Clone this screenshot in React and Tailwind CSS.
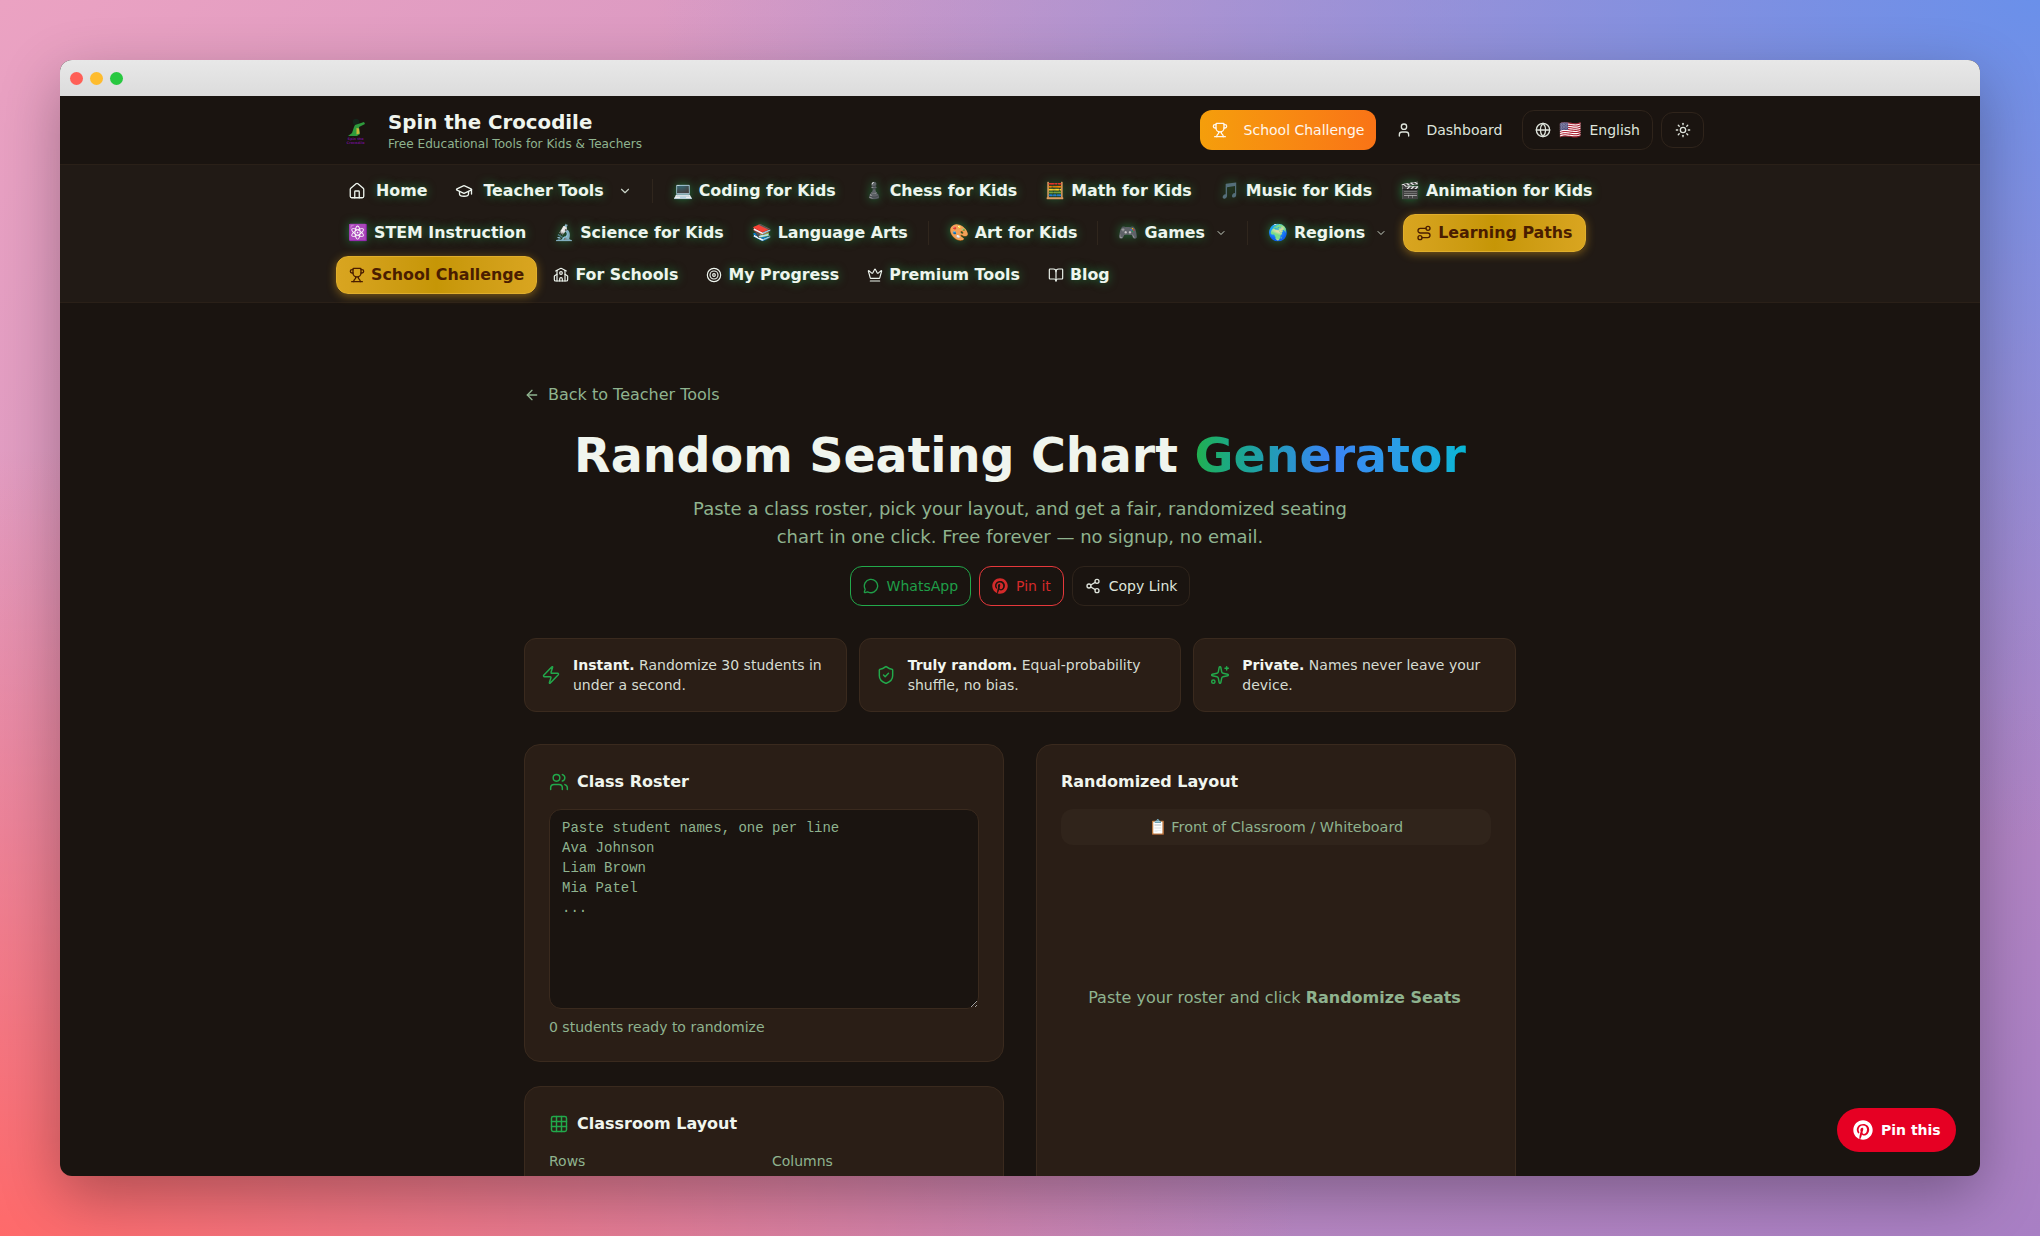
import {
    ArrowLeft, BookOpen, ChevronDown, Crown, Globe, GraduationCap, Grid3x3, House, MessageCircle,
    Route, School, Share2, ShieldCheck, Sparkles, Sun, Target, Trophy, User, Users, Zap,
} from 'lucide-react';
import { FaPinterest } from 'react-icons/fa';

const glow = '[text-shadow:0_0_10px_rgba(34,197,94,0.55)]';

function NavItem({ icon: Icon, emoji, label, caret, iconSize = 16, gap = 'gap-1.5' }) {
    return (
        <a className={`flex h-[38px] items-center ${gap} rounded-xl px-3 text-[15.85px] font-bold text-[#eef5ee] ${glow}`}>
            {Icon && <Icon size={iconSize} strokeWidth={1.75} />}
            {emoji && <span className="w-5 text-center text-base leading-none">{emoji}</span>}
            {label}
            {caret && <ChevronDown size={caret} className="ml-1 text-[#c9d2c6]" />}
        </a>
    );
}

function GoldPill({ icon: Icon, label }) {
    return (
        <a className="flex h-[38px] items-center gap-1.5 rounded-xl border border-[#e0ae2c] bg-gradient-to-r from-[#d9a520] via-[#c69606] to-[#d9a520] px-3 text-[15.85px] font-bold text-[#4a1d00] shadow-[0_2px_10px_rgba(234,170,30,0.45)]">
            <Icon size={16} strokeWidth={2} />
            {label}
        </a>
    );
}

function Divider() {
    return <div className="mx-1 h-6 w-px bg-[#30261d]" />;
}

function Feature({ icon: Icon, title, text }) {
    return (
        <div className="flex items-center gap-3 rounded-xl border border-[#3a2a1e] bg-[#2a1e16] px-4 py-4 text-sm leading-5 text-[#d6dcd2]">
            <Icon size={20} className="shrink-0 text-[#22a94b]" strokeWidth={1.75} />
            <p><b className="font-bold text-[#f2f6f0]">{title}</b> {text}</p>
        </div>
    );
}

function CrocLogo() {
    return (
        <svg width="40" height="40" viewBox="0 0 40 40" className="shrink-0">
            <circle cx="20" cy="12" r="3.2" fill="#14241a" />
            <path d="M19 15l9-3 1 2-6 3 1 7-3 2h-9l4-3 2-6z" fill="#2e9a3c" />
            <path d="M20.5 18l2.5 0.5 0.5 5-3 1z" fill="#c8b43a" />
            <text x="19.5" y="30" textAnchor="middle" fontSize="3.4" fontWeight="700" fill="#6b0f8a" fontFamily="DejaVu Sans">Spin the</text>
            <text x="19.5" y="34" textAnchor="middle" fontSize="3.4" fontWeight="700" fill="#6b0f8a" fontFamily="DejaVu Sans">Crocodile</text>
        </svg>
    );
}

export default function App() {
    const placeholder = 'Paste student names, one per line\nAva Johnson\nLiam Brown\nMia Patel\n...';

    return (
        <div className="h-[1236px] w-[2040px] overflow-hidden bg-[radial-gradient(ellipse_at_top_right,#6a90ea_0%,transparent_48%),radial-gradient(ellipse_at_bottom_left,#ff6a6a_0%,transparent_45%),linear-gradient(135deg,#eba2c2,#a87fc4)] p-[60px] font-['DejaVu_Sans',sans-serif]">
            <div className="relative flex h-[1116px] flex-col overflow-hidden rounded-xl bg-[#1a1410] shadow-[0_20px_60px_rgba(0,0,0,0.3)]">
                {/* Window chrome */}
                <div className="flex h-9 shrink-0 items-center gap-[7px] bg-gradient-to-b from-[#e8e8e8] to-[#dcdcdc] pl-[10px]">
                    <span className="h-[13px] w-[13px] rounded-full bg-[#ff5f57]" />
                    <span className="h-[13px] w-[13px] rounded-full bg-[#febc2e]" />
                    <span className="h-[13px] w-[13px] rounded-full bg-[#28c840]" />
                </div>

                {/* Header */}
                <header className="shrink-0 border-b border-[#2a2018]">
                    <div className="mx-auto flex h-[68px] w-[1400px] items-center justify-between px-4">
                        <div className="flex items-center gap-3">
                            <CrocLogo />
                            <div>
                                <div className="pt-px text-[19.8px] leading-[27px] font-bold text-[#f0f5ee]">Spin the Crocodile</div>
                                <div className="text-[12.1px] leading-4 text-[#8fb38f]">Free Educational Tools for Kids &amp; Teachers</div>
                            </div>
                        </div>
                        <div className="flex items-center gap-2">
                            <a className="flex h-10 items-center gap-4 rounded-xl bg-gradient-to-r from-[#f59e0b] to-[#f97316] px-3 text-sm text-[#fff7ed]">
                                <Trophy size={16} />
                                School Challenge
                            </a>
                            <a className="flex h-10 items-center gap-3.5 px-3 text-sm text-[#dfe4dc]">
                                <User size={16} />
                                Dashboard
                            </a>
                            <a className="flex h-10 items-center gap-2 rounded-xl border border-[#2f241b] px-3 text-sm text-[#dfe4dc]">
                                <Globe size={16} />
                                <span className="text-lg leading-none">🇺🇸</span>
                                English
                            </a>
                            <a className="flex h-9 w-[43px] items-center justify-center rounded-xl border border-[#2f241b] text-[#dfe4dc]">
                                <Sun size={16} />
                            </a>
                        </div>
                    </div>
                </header>

                {/* Category nav */}
                <nav className="shrink-0 border-b border-[#2a2018] bg-[#211a15]">
                    <div className="mx-auto flex w-[1400px] flex-wrap items-center gap-1 px-4 pt-[7px] pb-2">
                        <NavItem icon={House} iconSize={18} gap="gap-2.5" label="Home" />
                        <NavItem icon={GraduationCap} iconSize={18} gap="gap-2.5" label="Teacher Tools" caret={14} />
                        <Divider />
                        <NavItem emoji="💻" label="Coding for Kids" />
                        <NavItem emoji="♟️" label="Chess for Kids" />
                        <NavItem emoji="🧮" label="Math for Kids" />
                        <NavItem emoji="🎵" label="Music for Kids" />
                        <NavItem emoji="🎬" label="Animation for Kids" />
                        <NavItem emoji="⚛️" label="STEM Instruction" />
                        <NavItem emoji="🔬" label="Science for Kids" />
                        <NavItem emoji="📚" label="Language Arts" />
                        <Divider />
                        <NavItem emoji="🎨" label="Art for Kids" />
                        <Divider />
                        <NavItem emoji="🎮" label="Games" caret={12} />
                        <Divider />
                        <NavItem emoji="🌍" label="Regions" caret={12} />
                        <GoldPill icon={Route} label="Learning Paths" />
                        <GoldPill icon={Trophy} label="School Challenge" />
                        <NavItem icon={School} label="For Schools" />
                        <NavItem icon={Target} label="My Progress" />
                        <NavItem icon={Crown} label="Premium Tools" />
                        <NavItem icon={BookOpen} label="Blog" />
                    </div>
                </nav>

                {/* Main */}
                <main className="mx-auto w-[1024px] px-4 pt-20">
                    <a className="flex items-center gap-2 text-base text-[#8fb38f]">
                        <ArrowLeft size={16} />
                        Back to Teacher Tools
                    </a>

                    <div className="mt-[23px] text-center">
                        <h1 className="text-[47.5px] leading-[52px] font-bold text-[#f0f5ee]">
                            Random Seating Chart{' '}
                            <span className="bg-gradient-to-r from-[#22b04a] via-[#3b82f6] to-[#06b6d4] bg-clip-text text-transparent">Generator</span>
                        </h1>
                        <p className="mx-auto mt-[13px] max-w-2xl text-lg leading-7 text-[#8fb38f]">
                            Paste a class roster, pick your layout, and get a fair, randomized seating chart in one click. Free forever — no signup, no email.
                        </p>
                        <div className="mt-[15px] flex justify-center gap-2">
                            <a className="flex h-10 items-center gap-2 rounded-xl border border-[#22a94b] px-3 text-sm text-[#1f9e48]">
                                <MessageCircle size={16} />
                                WhatsApp
                            </a>
                            <a className="flex h-10 items-center gap-2 rounded-xl border border-[#e5383b] px-3 text-sm text-[#d42a2a]">
                                <FaPinterest size={16} />
                                Pin it
                            </a>
                            <a className="flex h-10 items-center gap-2 rounded-xl border border-[#2f241b] px-3 text-sm text-[#dfe4dc]">
                                <Share2 size={16} />
                                Copy Link
                            </a>
                        </div>
                    </div>

                    <div className="mt-8 grid grid-cols-3 gap-3">
                        <Feature icon={Zap} title="Instant." text="Randomize 30 students in under a second." />
                        <Feature icon={ShieldCheck} title="Truly random." text="Equal-probability shuffle, no bias." />
                        <Feature icon={Sparkles} title="Private." text="Names never leave your device." />
                    </div>

                    <div className="mt-8 grid grid-cols-2 gap-8">
                        <div className="space-y-6">
                            <section className="rounded-2xl border border-[#3a2a1e] bg-[#2a1e16] p-6">
                                <h2 className="mb-[15px] flex items-center gap-2 pt-px text-base font-bold text-[#f0f5ee]">
                                    <Users size={20} className="text-[#22a94b]" strokeWidth={1.75} />
                                    Class Roster
                                </h2>
                                <textarea
                                    readOnly
                                    placeholder={placeholder}
                                    className="block h-[200px] w-full rounded-xl border border-[#3a2a1e] bg-[#1a1410] px-3 py-2 font-['Liberation_Mono',monospace] text-sm leading-5 placeholder:text-[#8fb38f]"
                                />
                                <p className="mt-2 text-sm leading-5 text-[#8fb38f]">0 students ready to randomize</p>
                            </section>
                            <section className="rounded-2xl border border-[#3a2a1e] bg-[#2a1e16] p-6">
                                <h2 className="mb-[15px] flex items-center gap-2 pt-px text-base font-bold text-[#f0f5ee]">
                                    <Grid3x3 size={20} className="text-[#22a94b]" strokeWidth={1.75} />
                                    Classroom Layout
                                </h2>
                                <div className="grid grid-cols-2 gap-4 text-sm leading-5 text-[#8fb38f]">
                                    <div>Rows</div>
                                    <div>Columns</div>
                                </div>
                            </section>
                        </div>
                        <section className="rounded-2xl border border-[#3a2a1e] bg-[#2a1e16] p-6">
                            <h2 className="mb-[15px] pt-px text-base font-bold text-[#f0f5ee]">Randomized Layout</h2>
                            <div className="rounded-xl bg-[#30241b] py-2 text-center text-[14.4px] leading-5 text-[#8fb38f]">📋 Front of Classroom / Whiteboard</div>
                            <div className="flex h-[306px] items-center justify-center pr-[3px] text-base text-[#8fb38f]">
                                <p>Paste your roster and click <b className="font-bold">Randomize Seats</b></p>
                            </div>
                        </section>
                    </div>
                </main>

                <a className="absolute right-6 bottom-6 flex h-11 w-[119px] items-center gap-2 rounded-full bg-[#e60023] pl-4 text-sm font-bold whitespace-nowrap text-white">
                    <FaPinterest size={20} />
                    Pin this
                </a>
            </div>
        </div>
    );
}
